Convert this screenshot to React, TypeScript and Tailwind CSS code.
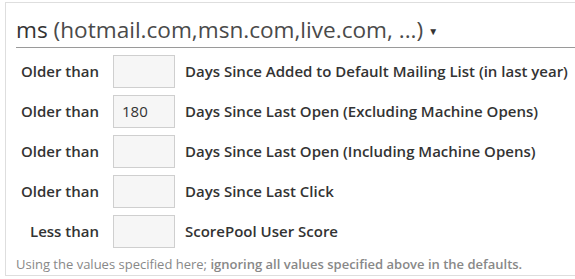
const rows = [
  { label: "Older than", value: "", text: "Days Since Added to Default Mailing List (in last year)" },
  { label: "Older than", value: "180", text: "Days Since Last Open (Excluding Machine Opens)" },
  { label: "Older than", value: "", text: "Days Since Last Open (Including Machine Opens)" },
  { label: "Older than", value: "", text: "Days Since Last Click" },
  { label: "Less than", value: "", text: "ScorePool User Score" },
];

export default function App() {
  return (
    <div className="bg-white w-[575px] h-[279px] overflow-hidden pt-[2px] pl-[5px] font-['Open_Sans',sans-serif]">
      <div className="w-[572px] h-[274px] border border-[#dedede] pl-[10px]">
        <div className="h-[45px] border-b border-[#9a9a9a] flex items-end pb-[3px]">
          <span className="text-[22.6px] leading-[28px] text-[#4a4a4a] whitespace-nowrap">
            <span className="font-medium text-[#333]">ms</span> (hotmail.com,msn.com,live.com, ...)
          </span>
          <span className="text-[10px] text-[#333] ml-[5px] mb-[5px]">▼</span>
        </div>
        <div className="pt-[7px] flex flex-col gap-[8px]">
          {rows.map((r, i) => (
            <div key={i} className="flex items-center h-[32px]">
              <div className="w-[83px] text-right text-[15px] font-semibold text-[#333] whitespace-nowrap">{r.label}</div>
              <div className="ml-[14px] w-[62px] h-[33px] bg-[#f6f6f6] border border-[#cfcfcf] flex items-center pl-[8px] text-[15px] text-[#333]">
                {r.value}
              </div>
              <div className="ml-[10px] text-[15px] font-semibold text-[#333] whitespace-nowrap">{r.text}</div>
            </div>
          ))}
        </div>
        <div className="mt-[8px] text-[13px] text-[#888] whitespace-nowrap">
          Using the values specified here; <span className="font-semibold">ignoring all values specified above in the defaults.</span>
        </div>
      </div>
    </div>
  );
}
